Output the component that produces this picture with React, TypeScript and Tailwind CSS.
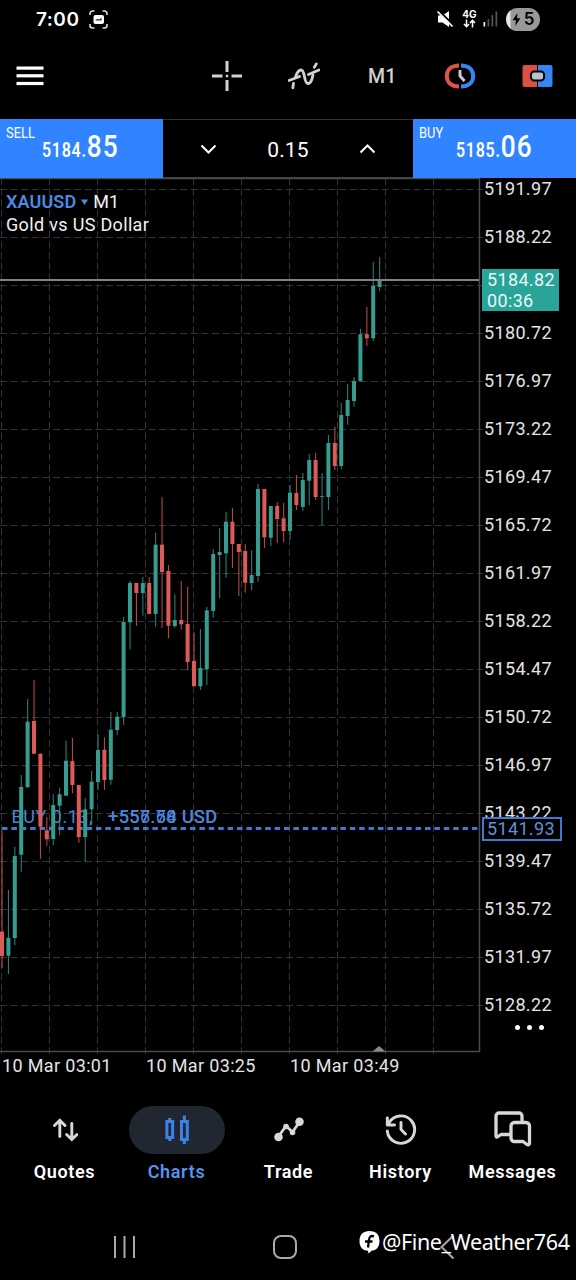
import type { ReactNode } from 'react';
import clsx from 'clsx';

type Candle = [kind: 'up' | 'down', high: number, top: number, bottom: number, low: number];

const candles: Candle[] = [
  ['down', 831, 931.7, 956, 968],
  ['up', 890, 937.7, 955.7, 974],
  ['up', 846.7, 856, 938, 945],
  ['up', 775, 787, 854.7, 871.7],
  ['up', 699, 721.7, 787.3, 787.3],
  ['down', 680, 721, 753.7, 753.7],
  ['down', 753.7, 753.7, 826.7, 858.7],
  ['down', 817, 830.3, 839.3, 845.7],
  ['up', 794, 805, 839, 845],
  ['up', 787.7, 794.3, 805.7, 835],
  ['up', 740.7, 760.7, 795.7, 795.7],
  ['down', 738, 761, 785, 793.3],
  ['down', 785, 785, 837, 842.7],
  ['up', 798, 809.3, 837, 862],
  ['up', 770.7, 781.7, 809.3, 825],
  ['up', 734.7, 750, 782, 790],
  ['down', 737.3, 749.7, 780, 790],
  ['up', 712, 729.7, 779.7, 784.7],
  ['up', 712, 716.7, 730, 735],
  ['up', 617, 622, 717, 725],
  ['up', 581, 583, 622.3, 649.3],
  ['down', 583, 583, 593, 625.7],
  ['up', 577, 583, 593, 615.7],
  ['down', 577, 583, 614, 614],
  ['up', 532.7, 544.7, 614, 626.7],
  ['down', 497.3, 544.7, 572, 628],
  ['down', 565, 571, 625.7, 638.3],
  ['up', 594.3, 620, 626, 628],
  ['down', 581, 620, 624.3, 629.7],
  ['down', 586.7, 624, 662, 670.3],
  ['down', 632.3, 661, 686.3, 686.3],
  ['up', 629, 668, 686.3, 690],
  ['up', 607, 610.3, 669, 685.3],
  ['up', 549, 554, 611, 617.7],
  ['up', 528, 552, 555, 598.3],
  ['up', 512, 521.7, 553.3, 577.7],
  ['down', 508, 521.7, 544, 568],
  ['down', 544, 544, 552, 596],
  ['down', 544, 551, 582.7, 592.7],
  ['up', 550, 575, 583, 590.3],
  ['up', 484, 489, 576, 581.7],
  ['down', 489, 489, 537.3, 548],
  ['up', 506, 506, 537.7, 546],
  ['down', 502, 506, 519, 543],
  ['down', 503, 518.3, 531, 542.3],
  ['up', 485, 492.7, 531, 539.3],
  ['down', 475, 493, 505, 510],
  ['up', 473, 480, 507, 511],
  ['up', 454, 460, 480.7, 505],
  ['down', 453, 460, 497, 500],
  ['up', 473, 496.2, 497, 525.3],
  ['up', 435, 443, 497, 510],
  ['down', 426.7, 443, 466, 470],
  ['up', 403, 415, 466, 469.3],
  ['up', 384, 400, 416, 424.7],
  ['up', 377, 381, 401, 406.7],
  ['up', 329, 334.3, 381.3, 381.3],
  ['down', 307, 334.3, 338.3, 346],
  ['up', 262, 286, 338.3, 341],
  ['up', 257, 280, 287, 291],
];

const prices = [
  '5191.97', '5188.22', '', '5180.72', '5176.97', '5173.22', '5169.47', '5165.72', '5161.97',
  '5158.22', '5154.47', '5150.72', '5146.97', '5143.22', '5139.47', '5135.72', '5131.97', '5128.22',
];

const times = ['10 Mar 03:01', '10 Mar 03:25', '10 Mar 03:49'];

function StatusBar() {
  return (
    <div className="flex h-[38px] items-center pl-[36px] pr-[36px] text-white">
      <span className="w-[43px] text-[19px] font-semibold leading-none tracking-[0.5px] font-['Inter',sans-serif]">7:00</span>
      <svg className="ml-[10px] mt-px" width="19" height="19" viewBox="0 0 19 19" fill="none">
        <path
          d="M1 5V3.5A2.5 2.5 0 0 1 3.500 1H5.500M13.500 1H15.500A2.500 2.500 0 0 1 18 3.500V5M18 14V15.500A2.500 2.500 0 0 1 15.500 18H13.500M5.500 18H3.500A2.500 2.500 0 0 1 1 15.500V14"
          stroke="#ddd"
          strokeWidth="1.6"
        />
        <rect x="4.500" y="5" width="10.500" height="9" rx="2" fill="#fff" />
        <path d="M6.500 10.500V9.800L9 9L10.500 9.500L12.500 7.500V10.500Z" fill="#222" />
      </svg>
      <svg className="ml-auto" width="18" height="18" viewBox="0 0 18 18">
        <path d="M2 5.500H6.500L13 1V17L6.500 12.500H2Z" fill="#fff" />
        <path d="M3 1L18 15.500" stroke="#000" strokeWidth="2" />
        <path d="M1.500 1.500L16.500 16.500" stroke="#fff" strokeWidth="1.700" />
      </svg>
      <div className="ml-[8px] flex w-[15px] flex-col items-center">
        <span className="text-[10px] font-bold leading-[9px] font-['Inter',sans-serif]">4G</span>
        <svg width="13" height="9" viewBox="0 0 13 9" fill="none" stroke="#fff" strokeWidth="1.500">
          <path d="M3.500 0.500V7.500M1 5L3.500 7.700L6 5M9.500 8.500V1.500M7 4L9.500 1.300L12 4" />
        </svg>
      </div>
      <svg className="ml-[6px]" width="15" height="16" viewBox="0 0 15 16">
        <rect x="0.500" y="11" width="1.700" height="4.500" fill="#eee" />
        <rect x="4.500" y="8" width="1.700" height="7.500" fill="#555" />
        <rect x="8.500" y="4" width="1.700" height="11.500" fill="#555" />
        <rect x="12.500" y="0.500" width="1.700" height="15" fill="#555" />
      </svg>
      <div className="ml-[8px] flex h-[23px] w-[34px] items-center justify-center rounded-full bg-[linear-gradient(90deg,#e4e4e4_0_4px,#999_5px)] text-black">
        <svg width="9" height="13" viewBox="0 0 9 13">
          <path d="M5.500 0L0.500 7.200H4L3.200 13L8.500 5.300H5Z" />
        </svg>
        <span className="ml-[3px] text-[17px] font-semibold leading-none font-['Inter',sans-serif]">5</span>
      </div>
    </div>
  );
}

function Tool({ children }: { children: ReactNode }) {
  return <button className="flex w-[77.5px] items-center justify-center">{children}</button>;
}

function Toolbar() {
  return (
    <div className="flex h-[81px] items-center pb-[5px]">
      <svg className="ml-4" width="28" height="20" viewBox="0 0 28 20" fill="#fff">
        <rect x="0.500" y="0.500" width="27" height="3.200" />
        <rect x="0.500" y="8.200" width="27" height="3.200" />
        <rect x="0.500" y="15.900" width="27" height="3.200" />
      </svg>
      <div className="ml-auto flex">
        <Tool>
          <svg width="30" height="30" viewBox="0 0 30 30" fill="#d2d2d2">
            <rect x="13.500" y="0" width="3" height="11" />
            <rect x="13.500" y="19" width="3" height="11" />
            <rect x="0" y="13.500" width="10.500" height="3" />
            <rect x="19.500" y="13.500" width="10.500" height="3" />
            <rect x="13.800" y="13.800" width="2.400" height="2.400" />
          </svg>
        </Tool>
        <Tool>
          <svg className="-ml-[2px]" width="32" height="28" viewBox="0 0 32 28" fill="none" stroke="#d2d2d2" strokeWidth="2.800" strokeLinecap="round" strokeLinejoin="round">
            <path d="M1 18.500L11.500 14.500M20.500 12.500L31 8" />
            <path d="M4.800 25.800L5.500 21.500M7.500 15C9 10.500 10.500 8 13 8C17.500 8 15.500 21.500 20 21.500C23 21.500 24 17.500 25 13M26.300 5.200L28.300 2" />
          </svg>
        </Tool>
        <Tool>
          <span className="text-[21px] font-medium leading-none text-[#d0d0d0] font-['Roboto',sans-serif]">
            <span className="inline-block scale-x-[0.93]">M1</span>
          </span>
        </Tool>
        <Tool>
          <svg width="32" height="26" viewBox="0 0 32 26" fill="none">
            <path d="M15.200 2.500C7 2.500 2.800 7 2.800 13S7 23.500 15.200 23.500" stroke="#dd5548" strokeWidth="4" />
            <path d="M16.800 2.500C25 2.500 29.200 7 29.200 13S25 23.500 16.800 23.500" stroke="#3585f2" strokeWidth="4" />
            <path d="M16 0V7M16 19V26" stroke="#000" strokeWidth="1.500" />
            <path d="M16 7V13L20.500 18" stroke="#c4cad0" strokeWidth="3" />
          </svg>
        </Tool>
        <Tool>
          <svg width="31" height="22" viewBox="0 0 31 22">
            <path d="M2.500 0H15V22H2.500A2 2 0 0 1 0.500 20V2A2 2 0 0 1 2.500 0Z" fill="#dd5044" />
            <path d="M16 0H28.500A2 2 0 0 1 30.500 2V20A2 2 0 0 1 28.500 22H16Z" fill="#3486f4" />
            <rect x="8.900" y="6.500" width="13.200" height="9" rx="3.500" fill="#b9c3cc" stroke="#000" strokeWidth="2" />
          </svg>
        </Tool>
      </div>
    </div>
  );
}

function Quote({ label, whole, pips, gap }: { label: string; whole: string; pips: string; gap: string }) {
  return (
    <button className="flex w-[163px] shrink-0 items-start bg-[#3184ff] pl-[6px] text-left text-white">
      <span className={clsx('shrink-0 pt-[6px] text-[15px] leading-4', gap)}>
        <span className="inline-block origin-left scale-x-[0.86]">{label}</span>
      </span>
      <span className="mt-[11px] inline-block origin-left scale-x-[0.82] whitespace-nowrap leading-8">
        <span className="text-[19.5px] font-semibold tracking-[0.9px]">{whole}.</span>
        <span className="text-[32px] font-medium tracking-[1.2px]">{pips}</span>
      </span>
    </button>
  );
}

function TradeBar() {
  return (
    <div className="flex h-[59px]">
      <Quote label="SELL" whole="5184" pips="85" gap="w-[36px]" />
      <div className="flex flex-1 items-center justify-between border-y border-t-[#333438] border-b-[#3f4249] px-[37px] text-white">
        <svg width="17" height="10" viewBox="0 0 17 10" fill="none" stroke="#fff" strokeWidth="2">
          <path d="M1.500 1.500L8.500 8.500L15.500 1.500" />
        </svg>
        <span className="pt-[2px] text-[21px] leading-6 tracking-[0.2px]">0.15</span>
        <svg width="17" height="10" viewBox="0 0 17 10" fill="none" stroke="#fff" strokeWidth="2">
          <path d="M1.500 8.500L8.500 1.500L15.500 8.500" />
        </svg>
      </div>
      <Quote label="BUY" whole="5185" pips="06" gap="w-[37px]" />
    </div>
  );
}

function Plot() {
  return (
    <svg className="block" width="484" height="878" viewBox="0 178 484 878">
      <g stroke="#343434" strokeWidth="1" strokeDasharray="7 3.600">
        {Array.from({ length: 18 }, (_, i) => (
          <line key={i} x1="0" x2="483" y1={189.5 + i * 48} y2={189.5 + i * 48} />
        ))}
        {Array.from({ length: 10 }, (_, i) => (
          <line key={i} x1={1.5 + i * 48} x2={1.5 + i * 48} y1="178" y2="1054" />
        ))}
      </g>
      <path d="M0 178.500H479.500V1051.500H0" fill="none" stroke="#484a4e" strokeWidth="1.500" />
      <path d="M372.500 1051.500L379 1046L385.500 1051.500Z" fill="#8a8a8a" />

      {/* open position */}
      <line x1="2" x2="479" y1="828.600" y2="828.600" stroke="#3f78d0" strokeWidth="3" strokeDasharray="5.500 3.900" />
      <g fill="#4a83da" fontFamily="Roboto, sans-serif" fontSize="18">
        <text x="11.500" y="823" textLength="81">BUY 0.13,</text>
        <text x="108" y="823" textLength="109">+557.58 USD</text>
        <text x="108" y="823" textLength="109">+556.74 USD</text>
        <text x="108" y="823" textLength="109">+557.60 USD</text>
      </g>

      {candles.map(([kind, high, top, bottom, low], i) => {
        const x = 2 + i * 6.4;
        const color = kind === 'up' ? '#379b8f' : '#dc5a58';
        return (
          <g key={i} fill={color}>
            <rect x={x - 0.5} y={high} width="1.100" height={low - high} opacity="0.8" />
            <rect x={x - 2} y={top} width="4" height={bottom - top} />
          </g>
        );
      })}
      <line x1="0" x2="479" y1="280" y2="280" stroke="#85817b" strokeWidth="2" />
    </svg>
  );
}

function Chart() {
  return (
    <div className="relative flex h-[904px] flex-col">
      <div className="flex h-[878px]">
        <Plot />
        <div className="flex flex-col gap-[26px]">
          {prices.map((price, i) => (
            <span key={i} className="h-[22px] text-[18px] leading-[22px] tracking-[0.35px] text-[#e4e4e4]">
              {price}
            </span>
          ))}
        </div>
      </div>
      <div className="flex pl-[2px] text-[18px] leading-[20px] tracking-[0.35px] text-[#e4e4e4]">
        {times.map((time) => (
          <span key={time} className="w-36">{time}</span>
        ))}
      </div>

      <div className="absolute left-[6px] top-[13px] text-[18px] leading-[22.5px] text-[#f2f2f2]">
        <div className="flex items-center">
          <span className="font-semibold tracking-[0.1px] text-[#4a8ae6]">XAUUSD</span>
          <svg className="mx-[5px]" width="7" height="6" viewBox="0 0 7 6" fill="#4a8ae6">
            <path d="M0 0.500H7L3.500 6Z" />
          </svg>
          <span>M1</span>
        </div>
        <div className="tracking-[0.33px]">Gold vs US Dollar</div>
      </div>
      <div className="absolute left-[482px] top-[91px] h-[42px] w-[77px] bg-[#28a498] pl-[5px] pt-px text-[18px] leading-[20.500px] tracking-[0.35px] text-[#ecf8f7]">
        <div>5184.82</div>
        <div>00:36</div>
      </div>
      <div className="absolute left-[482px] top-[639px] h-[24px] w-[80px] border-2 border-[#3f78d0] bg-black pl-[3px] text-[18px] leading-[20px] tracking-[0.35px] text-[#5b92dc]">
        5141.93
      </div>
      <div className="absolute left-[515px] top-[847px] flex gap-[7px]">
        <span className="size-[5px] rounded-full bg-white" />
        <span className="size-[5px] rounded-full bg-white" />
        <span className="size-[5px] rounded-full bg-white" />
      </div>
    </div>
  );
}

const tabs = [
  {
    label: 'Quotes',
    icon: (
      <svg width="26" height="24" viewBox="0 0 26 24" fill="none" stroke="#d8d8d8" strokeWidth="2.900" strokeLinecap="round">
        <path d="M7.800 18.500V3M2.500 7.500L7.800 2.300L13 7.500M19.800 5.500V21M14.600 16.500L19.800 21.500L25 16.500" />
      </svg>
    ),
  },
  {
    label: 'Charts',
    active: true,
    icon: (
      <svg width="26" height="30" viewBox="0 0 26 30" fill="none" stroke="#3b82e8" strokeWidth="3">
        <path d="M2.900 6.400H8.600V22.600H2.900ZM17.500 6.400H23.300V24.400H17.500ZM5.800 3V6M5.800 23V26M20.400 0.500V6M20.400 25V29" />
      </svg>
    ),
  },
  {
    label: 'Trade',
    icon: (
      <svg width="30" height="25" viewBox="0 0 30 25" fill="none" stroke="#d8d8d8" strokeWidth="2.800" strokeLinejoin="round">
        <path d="M4.500 19.500L12 9L18.500 15L25.500 5" />
        <circle cx="4.500" cy="20" r="4.300" fill="#d8d8d8" stroke="none" />
        <circle cx="12" cy="9.500" r="2.800" fill="#d8d8d8" stroke="none" />
        <circle cx="18.500" cy="15.500" r="2.800" fill="#d8d8d8" stroke="none" />
        <circle cx="25.500" cy="4.800" r="4.300" fill="#d8d8d8" stroke="none" />
      </svg>
    ),
  },
  {
    label: 'History',
    icon: (
      <svg className="-mt-px" width="32" height="32" viewBox="0 0 32 32" fill="none" stroke="#d8d8d8" strokeWidth="2.900" strokeLinecap="round" strokeLinejoin="round">
        <path d="M2.300 18A13.700 13.700 0 1 0 4.200 9.500L2.300 12M2.300 5V12H9.500M16 9.500V16.500L20.500 21" />
      </svg>
    ),
  },
  {
    label: 'Messages',
    icon: (
      <svg className="-mt-px" width="38" height="36" viewBox="0 0 38 36" fill="none" stroke="#d8d8d8" strokeWidth="3.300" strokeLinejoin="round">
        <path d="M28 11.500V5A3 3 0 0 0 25 2H5A3 3 0 0 0 2 5V24.500Q2 27 4 25.500L7 23.500H16.500" />
        <path d="M20.500 11.500H32A3.500 3.500 0 0 1 35.500 15V32Q35.500 34.500 33 33.500L29 30.500H20.500A3.500 3.500 0 0 1 17 27V15A3.500 3.500 0 0 1 20.500 11.500Z" />
      </svg>
    ),
  },
];

function BottomNav() {
  return (
    <nav className="flex pl-[8.5px] pt-[23.5px]">
      {tabs.map(({ label, icon, active }) => (
        <button key={label} className="flex w-28 flex-col items-center">
          <span className={clsx('flex h-12 w-24 items-center justify-center rounded-full', active && 'bg-[#202731]')}>
            {icon}
          </span>
          <span
            className={clsx(
              'mt-[6px] text-[18px] font-semibold leading-6 tracking-[0.65px]',
              active ? 'text-[#5294f0]' : 'text-white',
            )}
          >
            {label}
          </span>
        </button>
      ))}
    </nav>
  );
}

function SystemNav() {
  return (
    <div className="relative mt-auto flex h-[67px] items-center pl-[114px]">
      <svg width="22" height="24" viewBox="0 0 22 24" fill="#a9a9a9">
        <rect x="0" y="1" width="2" height="22" />
        <rect x="9.500" y="1" width="2" height="22" />
        <rect x="19" y="1" width="2" height="22" />
      </svg>
      <div className="ml-[137px] size-[24px] rounded-[8px] border-2 border-[#a9a9a9]" />
      <svg className="ml-[143px]" width="15" height="26" viewBox="0 0 15 26" fill="none" stroke="#a9a9a9" strokeWidth="2">
        <path d="M13.500 1.500L1.500 13L13.500 24.500" />
      </svg>
      <div className="absolute left-[359px] top-[15px] flex items-center text-white">
        <svg width="21" height="24" viewBox="0 0 21 24">
          <path d="M10.500 1C17 1 20.500 4.500 20.500 11C20.500 17.500 17 20.500 12.500 20.700L9.500 23.500L9 20.800C3.500 20.500 0.500 17 0.500 11C0.500 4.500 4 1 10.500 1Z" fill="#fff" />
          <path d="M15 6.300C11.500 5.300 10.300 7 10 10L9 17.500M6 11.500H13.500" fill="none" stroke="#000" strokeWidth="2.300" />
        </svg>
        <span className="ml-[2px] text-[21.500px] leading-7 tracking-[-0.38px] font-['Noto_Sans',sans-serif]">@Fine_Weather764</span>
      </div>
    </div>
  );
}

export default function App() {
  return (
    <div className="flex h-[1280px] w-[576px] flex-col overflow-hidden bg-black font-['Roboto',sans-serif]">
      <StatusBar />
      <Toolbar />
      <TradeBar />
      <Chart />
      <BottomNav />
      <SystemNav />
    </div>
  );
}
